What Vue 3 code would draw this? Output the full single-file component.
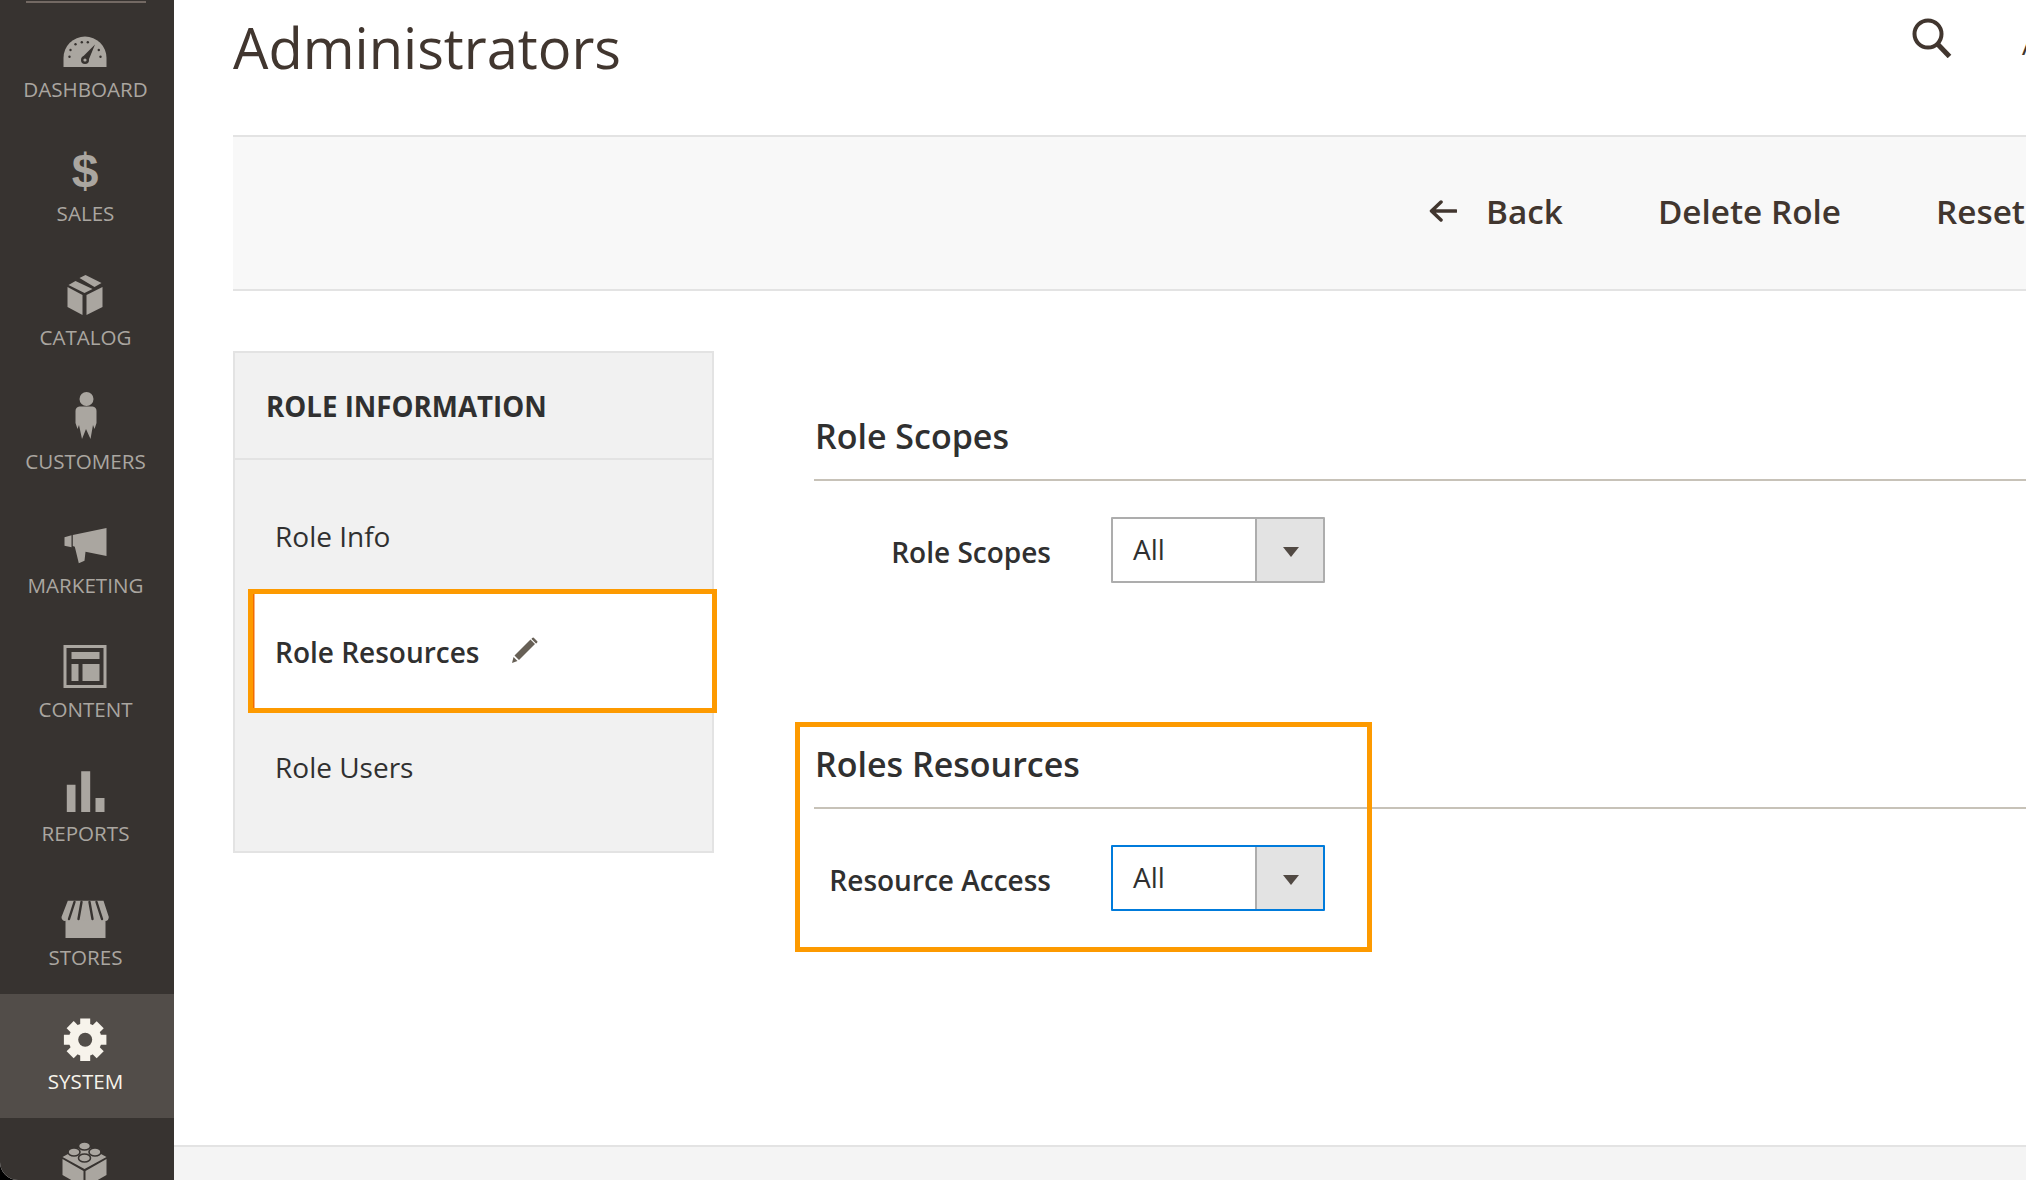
<script setup>
const gearAngles = [0, 45, 90, 135]
</script>

<template>
  <div class="app">
    <aside class="sidebar">
      <div class="logo-rule"></div>
      <nav class="menu">
        <a class="menu-item">
          <svg class="mi" viewBox="55.5 0 60 68">
            <path class="l" d="M64 65V56A21.5 21.5 0 0 1 107 56V65Z" />
            <g class="d">
              <circle cx="70" cy="54.7" r="1.2" /><circle cx="71" cy="48" r="1.2" /><circle cx="76" cy="42.3" r="1.2" />
              <circle cx="82.3" cy="40.3" r="1.2" /><circle cx="88.3" cy="40.3" r="1.2" /><circle cx="99.3" cy="48" r="1.2" />
              <circle cx="101" cy="54.7" r="1.2" />
              <path d="M95.5 42.5L88.5 59.5L82.5 55.5Z" /><circle cx="85.5" cy="58" r="4" />
            </g>
            <circle class="l" cx="85.5" cy="58" r="1.6" />
          </svg>
          <span>DASHBOARD</span>
        </a>
        <a class="menu-item">
          <svg class="mi" viewBox="55.5 0 60 68"><text class="dollar" x="85.5" y="61" text-anchor="middle">$</text></svg>
          <span>SALES</span>
        </a>
        <a class="menu-item">
          <svg class="mi" viewBox="55.5 0 60 68">
            <path class="l" d="M68 37L83 45V65L68 57ZM87 45L103 37V57L87 65ZM69 35L76 31L93 39L85 43ZM80 28L86 25L102 33L95 37Z" />
          </svg>
          <span>CATALOG</span>
        </a>
        <a class="menu-item">
          <svg class="mi" viewBox="55.5 0 60 68">
            <g transform="translate(76 18)">
              <circle class="l" cx="11" cy="7" r="7" />
              <path class="l" d="M4 14.5H17Q21 15 21 19V31L19 37L17.5 33L15 47L10.5 37L6.5 47L3.5 33L2 37L0 31V19Q0 15 4 14.5Z" />
            </g>
          </svg>
          <span>CUSTOMERS</span>
        </a>
        <a class="menu-item">
          <svg class="mi" viewBox="55.5 0 60 68">
            <g transform="translate(65 30)">
              <path class="l" d="M8.3 7L42 0V28L21 23.7L20 32.7L14.3 35.3L10.3 18.7L8.3 18ZM0 9.3L7 7.3V19.3L0 17.7Z" />
            </g>
          </svg>
          <span>MARKETING</span>
        </a>
        <a class="menu-item">
          <svg class="mi" viewBox="55.5 0 60 68">
            <g transform="translate(64 23)">
              <rect class="frame" x="1.5" y="1.5" width="40" height="40" />
              <path class="l" d="M8 7H36V14H8ZM8 19H15V36H8ZM19 19H36V36H19Z" />
            </g>
          </svg>
          <span>CONTENT</span>
        </a>
        <a class="menu-item">
          <svg class="mi" viewBox="55.5 0 60 68">
            <path class="l" d="M67.3 38.7H76V66H67.3ZM81.7 25.3H90.7V66H81.7ZM96 52H105V66H96Z" />
          </svg>
          <span>REPORTS</span>
        </a>
        <a class="menu-item">
          <svg class="mi" viewBox="55.5 0 60 68">
            <g transform="translate(62 30)">
              <path class="l" d="M4 18H44V38H4Z" />
              <path class="l" d="M6.3 .7H42L47.3 17Q47 21 44 21Q41 21 40 18Q38 21 35 21Q32 21 31 18Q29 21 24 21Q19 21 17 18Q16 21 13 21Q10 21 8 18Q7 21 3 21Q0 20 0 17Z" />
              <path class="awn" d="M13 2L7.5 19M20 2L17 19M28 2L31 19M35 2L40.5 19" />
            </g>
          </svg>
          <span>STORES</span>
        </a>
        <a class="menu-item active">
          <svg class="mi" viewBox="55.5 0 60 68">
            <circle class="gear" cx="85.7" cy="45.7" r="16.5" />
            <line v-for="a in gearAngles" :key="a" class="tooth" x1="85.7" y1="24.5" x2="85.7" y2="67" :transform="`rotate(${a} 85.7 45.7)`" />
            <circle class="hole" cx="85.7" cy="45.7" r="7" />
          </svg>
          <span>SYSTEM</span>
        </a>
        <a class="menu-item">
          <svg class="mi" viewBox="55.5 0 60 68">
            <g transform="translate(63 23)">
              <path class="l" d="M0 16L22 4L44 16L22 28ZM0 18L21 30V46L0 34ZM44 18L23 30V46L44 34Z" />
              <g class="stud">
                <ellipse cx="22" cy="5" rx="6" ry="4" />
                <ellipse cx="11.5" cy="11" rx="6" ry="4" />
                <ellipse cx="32.5" cy="11" rx="6" ry="4" />
                <ellipse cx="22" cy="17" rx="6" ry="4" />
              </g>
            </g>
          </svg>
        </a>
      </nav>
    </aside>

    <main class="main">
      <header class="page-head">
        <h1 class="page-title">Administrators</h1>
        <svg class="search" viewBox="0 0 40 40">
          <circle cx="16" cy="16" r="13.5" />
          <path d="M25.5 26L37.5 38.5" class="handle" />
        </svg>
        <span class="user">Admin</span>
      </header>

      <div class="toolbar">
        <button class="tool back">
          <svg class="arrow" viewBox="0 0 28 22"><path d="M27 11H3M12 2L2.5 11L12 20" /></svg>
          Back
        </button>
        <button class="tool">Delete Role</button>
        <button class="tool">Reset</button>
      </div>

      <div class="content">
        <section class="panel">
          <h3 class="panel-title">ROLE INFORMATION</h3>
          <ul class="tabs">
            <li class="tab">Role Info</li>
            <li class="tab current">
              Role Resources
              <svg class="pencil" viewBox="0 0 27 26">
                <path d="M19.5 2.5L24 7L8 23L3.5 18.5ZM21 1L22.5 .5L26.5 4.5L26 6L25 6.500L20.500 2ZM2.500 20L6.500 24L1 26Z" />
              </svg>
              <span class="callout callout-tab"></span>
            </li>
            <li class="tab">Role Users</li>
          </ul>
        </section>

        <div class="forms">
          <section class="fieldset">
            <h2 class="legend">Role Scopes</h2>
            <div class="field">
              <label class="field-label">Role Scopes</label>
              <div class="select">
                <span class="select-value">All</span>
                <span class="select-btn"><i class="caret"></i></span>
              </div>
            </div>
          </section>
          <section class="fieldset second">
            <h2 class="legend">Roles Resources</h2>
            <div class="field">
              <label class="field-label">Resource Access</label>
              <div class="select focus">
                <span class="select-value">All</span>
                <span class="select-btn"><i class="caret"></i></span>
              </div>
            </div>
            <span class="callout callout-section"></span>
          </section>
        </div>
      </div>

      <footer class="footer"></footer>
    </main>
  </div>
</template>

<style>
html, body { margin: 0; background: #000; }
</style>

<style scoped>
.app {
  display: flex;
  width: 2026px;
  height: 1180px;
  overflow: hidden;
  background: #fff;
  border-bottom-left-radius: 18px;
  font-family: "Open Sans", "Noto Sans", sans-serif;
}
.sidebar {
  position: relative;
  flex: 0 0 174px;
  background: #373330;
}
.logo-rule {
  height: 2px;
  width: 120px;
  margin: 0 0 0 26px;
  background: #736963;
  transform: translateY(1px);
}
.menu { display: flex; flex-direction: column; }
.menu-item {
  flex: 0 0 124px;
  height: 124px;
  padding-right: 4px;
  box-sizing: border-box;
  text-align: center;
  color: #aaa6a0;
  font-size: 20.6px;
}
.menu-item span { display: block; margin: -1px 0 0 1px; line-height: 40px; white-space: nowrap; }
.menu-item.active { background: #524d49; color: #f7f3eb; }
.mi { display: block; width: 60px; height: 68px; margin: 0 auto; overflow: visible; }
.l { fill: #aaa6a0; }
.d { fill: #373330; }
.dollar { fill: #aaa6a0; font: 700 48px "Liberation Sans", sans-serif; }
.frame { fill: none; stroke: #aaa6a0; stroke-width: 3; }
.awn { fill: none; stroke: #373330; stroke-width: 2.4; stroke-linecap: round; }
.gear { fill: #f7f3eb; }
.tooth { stroke: #f7f3eb; stroke-width: 10; }
.hole { fill: #524d49; }
.stud ellipse { fill: #aaa6a0; stroke: #373330; stroke-width: 1.6; }

.main {
  flex: 1 1 0;
  min-width: 0;
  display: flex;
  flex-direction: column;
  overflow: hidden;
  padding-left: 59px;
  position: relative;
}
.page-head {
  flex: 0 0 135px;
  display: flex;
  align-items: flex-start;
  white-space: nowrap;
}
.page-title {
  flex: 0 0 1679px;
  margin: 10px 0 0;
  font-size: 56px;
  line-height: 75px;
  font-weight: 400;
  color: #41362f;
}
.search { flex: 0 0 40px; width: 40px; height: 40px; margin-top: 18px; fill: none; stroke: #41362f; stroke-width: 4; }
.handle { stroke-width: 5; }
.user { margin: 27px 0 0 70px; font-size: 28px; line-height: 34px; color: #41362f; }

.toolbar {
  flex: 0 0 156px;
  box-sizing: border-box;
  display: flex;
  align-items: center;
  gap: 95px;
  padding: 0 0 5px 1196px;
  background: #f8f8f8;
  border-top: 2px solid #e3e3e3;
  border-bottom: 2px solid #e3e3e3;
  white-space: nowrap;
}
.tool {
  display: flex;
  align-items: center;
  gap: 29px;
  padding: 0;
  border: 0;
  background: none;
  font: 600 33.3px/40px "Open Sans", sans-serif;
  color: #41362f;
}
.arrow { width: 28px; height: 22px; fill: none; stroke: #41362f; stroke-width: 3.5; stroke-linecap: round; stroke-linejoin: round; }

.content {
  flex: 1 1 0;
  min-height: 0;
  display: flex;
  align-items: flex-start;
  gap: 100px;
  padding-top: 60px;
}
.panel {
  flex: 0 0 481px;
  box-sizing: border-box;
  height: 502px;
  background: #f1f1f1;
  border: 2px solid #e3e3e3;
}
.panel-title {
  height: 107px;
  margin: 0;
  box-sizing: border-box;
  padding-left: 31px;
  display: flex;
  align-items: center;
  border-bottom: 2px solid #e3e3e3;
  font-size: 27.7px;
  font-weight: 700;
  color: #303030;
}
.tabs { list-style: none; margin: 0; padding: 18px 0 0; }
.tab {
  position: relative;
  height: 116px;
  padding-left: 40px;
  display: flex;
  align-items: center;
  font-size: 28px;
  color: #303030;
}
.tab.current {
  height: 115px;
  margin-left: 13px;
  padding-left: 27px;
  background: #fff;
  font-weight: 600;
}
.pencil { width: 27px; height: 26px; margin-left: 32px; margin-top: -4px; fill: #676056; }
.callout { position: absolute; box-sizing: border-box; border: 5px solid #fd9a00; pointer-events: none; }
.callout-tab { left: 0; right: -5px; top: -5px; bottom: -4px; box-shadow: inset 1.5px 0 0 #f26b00; }
.callout-section { left: -19px; top: 0; width: 577px; height: 230px; border-width: 5.5px; }

.forms { flex: 1 1 0; min-width: 0; padding-top: 43px; }
.fieldset { position: relative; margin-right: -400px; }
.fieldset.second { margin-top: 137px; }
.legend {
  height: 87px;
  margin: 0;
  box-sizing: border-box;
  display: flex;
  align-items: center;
  padding: 0 0 2px 1px;
  border-bottom: 2px solid #c7c2b8;
  font-size: 34px;
  font-weight: 600;
  color: #303030;
}
.field { display: flex; align-items: flex-start; margin-top: 36px; gap: 60px; }
.field-label {
  flex: 0 0 237px;
  text-align: right;
  font-size: 28px;
  font-weight: 600;
  line-height: 65px;
  padding-top: 3px;
  color: #303030;
}
.select {
  flex: 0 0 214px;
  box-sizing: border-box;
  height: 66px;
  display: flex;
  border: 2px solid #adadad;
  border-radius: 1px;
  background: #fff;
}
.select.focus { border-color: #007bdb; }
.select-value {
  flex: 1 1 0;
  padding-left: 20px;
  font-size: 28px;
  line-height: 60px;
  color: #303030;
}
.select-btn {
  flex: 0 0 68px;
  box-sizing: border-box;
  display: flex;
  align-items: center;
  justify-content: center;
  padding: 3px 0 0 1px;
  background: #e3e3e3;
  border-left: 2px solid #adadad;
}
.caret {
  width: 0;
  height: 0;
  border-left: 8px solid transparent;
  border-right: 8px solid transparent;
  border-top: 10px solid #514943;
}
.footer {
  position: absolute;
  left: 0;
  right: 0;
  bottom: 0;
  height: 35px;
  box-sizing: border-box;
  background: #f4f4f4;
  border-top: 2px solid #e3e3e3;
}
</style>
